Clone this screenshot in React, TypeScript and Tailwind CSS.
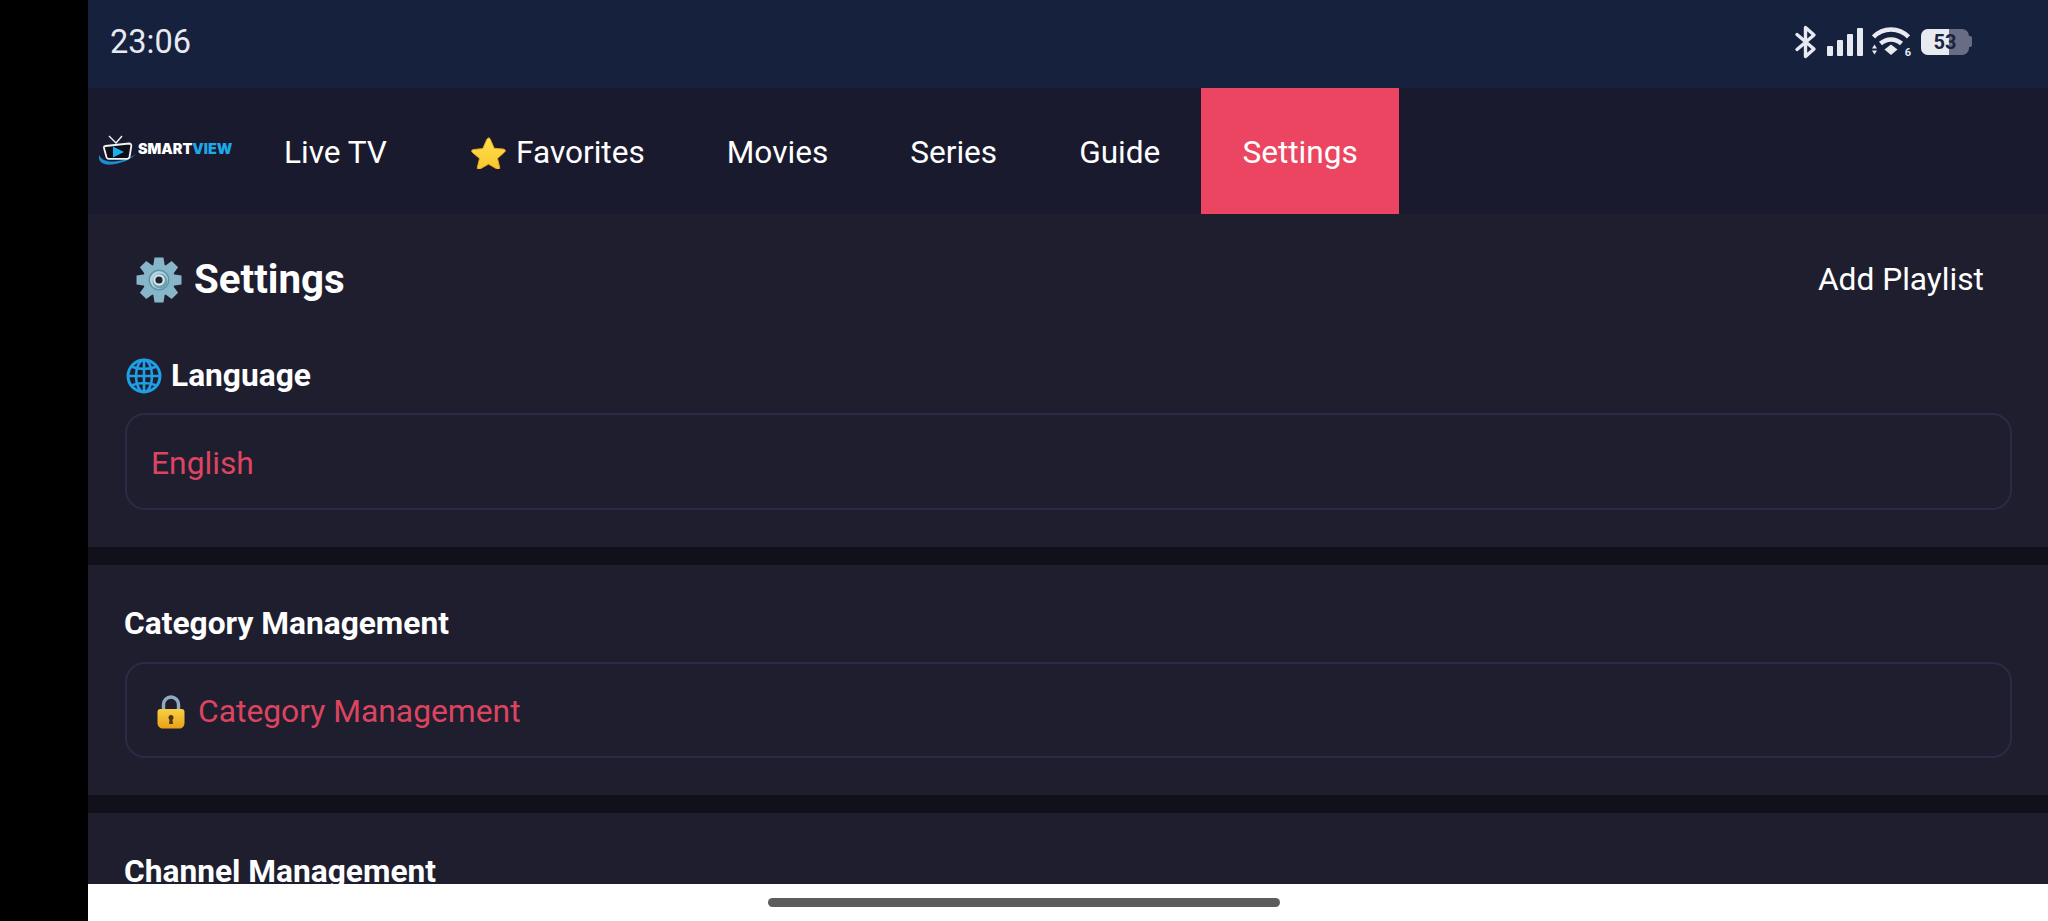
const FONT = "font-['Roboto',sans-serif]";

const tabs = ['Live TV', 'Favorites', 'Movies', 'Series', 'Guide', 'Settings'];

function Bluetooth() {
  return (
    <svg width="24" height="34" viewBox="0 0 24 34" fill="none" stroke="#e8eaf2" strokeWidth="3.4" strokeLinejoin="round" strokeLinecap="round">
      <path d="M3 9.5 20 24 11.5 31.5V2.5L20 10 3 24.5" />
    </svg>
  );
}

function Signal() {
  return (
    <svg width="36" height="28" viewBox="0 0 36 28" fill="#e8eaf2">
      <rect x="0" y="18" width="6" height="10" rx="1" />
      <rect x="10" y="12" width="6" height="16" rx="1" />
      <rect x="20" y="6" width="6" height="22" rx="1" />
      <rect x="30" y="0" width="6" height="28" rx="1" />
    </svg>
  );
}

function Wifi() {
  return (
    <div className="relative w-[38px] h-[30px]">
      <svg width="38" height="30" viewBox="0 0 38 30" fill="none">
        <path d="M1.5 10C11 0 27 0 36.5 10" stroke="#e8eaf2" strokeWidth="4.5" />
        <path d="M8.5 16.5C14.500 11 23.500 11 29.500 16.500" stroke="#e8eaf2" strokeWidth="4.500" />
        <path d="M12.500 22.500 19 17.500 25.500 22.500 19 28Z" fill="#e8eaf2" />
        <path d="M0 21.500H5L2.500 17.500ZM0 23.500H5L2.500 27.500Z" fill="#e8eaf2" />
      </svg>
      <span className="absolute right-[-1px] bottom-[-2px] text-[11px] leading-[12px] font-bold text-[#e8eaf2]">6</span>
    </div>
  );
}

function Battery() {
  return (
    <div className="flex items-center ml-[2px]">
      <div className="relative w-[48px] h-[26px] rounded-[7px] bg-[#686d85] overflow-hidden">
        <div className="h-full w-[28px] bg-[#e8eaf2]" />
        <span className="absolute inset-0 flex items-center justify-center text-[20px] leading-none font-bold text-[#1a2340]">53</span>
      </div>
      <div className="w-[3px] h-[11px] rounded-r-[2px] bg-[#686d85]" />
    </div>
  );
}

function Logo() {
  return (
    <div className="flex items-center w-[156px] h-full pl-[10px] pb-[3px] shrink-0">
      <svg width="40" height="34" viewBox="0 0 40 34" fill="none" className="shrink-0">
        <path d="M1.500 22C-1 28 5 32.500 14 31.500 23 30.500 32 27 38 21 31 26 22 28.500 14 28.500 7 28.500 2.500 26 1.500 22Z" fill="#1b8ed8" />
        <path d="M11 3 18 10 24 3" stroke="#f2f4f8" strokeWidth="1.400" />
        <path d="M7.500 13 31 10.500c1.500 0 2.500 1 2.300 2.500L31.500 24c-.3 1.200-1 1.800-2.300 1.800H11c-1.500 0-2.500-.8-2.700-2.300L6 15c-.2-1 .5-1.800 1.500-2Z" stroke="#f2f4f8" strokeWidth="1.800" fill="#0f0f18" />
        <path d="M15 13.500 26 19 15 24.500Z" fill="#1ab0ee" />
      </svg>
      <span className="text-[14.400px] leading-none font-black font-['Inter',sans-serif] text-white">
        SMART<span className="text-[#1fa8e8]">VIEW</span>
      </span>
    </div>
  );
}

function Star() {
  return (
    <svg width="35" height="33" viewBox="0 0 37 34" className="ml-[2px] mr-[10px] shrink-0">
      <defs>
        <linearGradient id="starFill" x1="0" y1="0" x2="0" y2="1">
          <stop offset="0" stopColor="#fde24f" />
          <stop offset="1" stopColor="#f8c62c" />
        </linearGradient>
      </defs>
      <path d="M18.500 1.500c1 0 1.500.6 2 1.700l4 9.300 9.800.9c2 .2 2.700 1.900 1.200 3.200l-7.500 6.700 2.300 9.400c.4 1.800-1.100 2.800-2.600 1.900l-9.200-5.300-9.200 5.300c-1.500.9-3-.1-2.600-1.900l2.300-9.400L1.500 17c-1.500-1.300-.8-3 1.200-3.200l9.800-.9 4-9.300c.5-1.100 1-1.700 2-1.700Z" fill="url(#starFill)" stroke="#e9a21f" strokeWidth="1" />
    </svg>
  );
}

function Gear() {
  const teeth = [0, 45, 90, 135, 180, 225, 270, 315];
  return (
    <svg width="46" height="46" viewBox="0 0 46 46" className="shrink-0">
      {teeth.map(a => (
        <path key={a} d="M18.500 0.500h9l1.500 10h-12Z" fill="#86b6c8" transform={`rotate(${a} 23 23)`} />
      ))}
      <circle cx="23" cy="23" r="16" fill="#86b6c8" />
      <circle cx="23" cy="23" r="10.500" fill="#5f93a8" />
      <path d="M23 14a9 9 0 0 1 9 9 9 9 0 0 1-9 9 9 9 0 0 1-9-9 9 9 0 0 1 9-9Z" fill="#b6d5df" />
      <circle cx="24" cy="24" r="7.500" fill="#6f9fb2" />
      <circle cx="23" cy="23" r="5.800" fill="#d6e6ea" />
      <circle cx="23" cy="23" r="3.600" fill="#20222e" />
    </svg>
  );
}

function Globe() {
  return (
    <svg width="36" height="36" viewBox="0 0 36 36" fill="none" stroke="#1e9fe6" strokeWidth="2.600" className="shrink-0">
      <circle cx="18" cy="18" r="16" strokeWidth="3" />
      <ellipse cx="18" cy="18" rx="8" ry="16" />
      <path d="M18 2v32M2 18h32M5 8.500c8 3 18 3 26 0M5 27.500c8-3 18-3 26 0" />
    </svg>
  );
}

function Lock() {
  return (
    <svg width="28" height="34" viewBox="0 0 28 34" className="shrink-0">
      <defs>
        <linearGradient id="lockFill" x1="0" y1="0" x2="0" y2="1">
          <stop offset="0" stopColor="#f9cf45" />
          <stop offset="1" stopColor="#e9a116" />
        </linearGradient>
      </defs>
      <path d="M6.500 16V9.500a7.500 7.500 0 0 1 15 0V16" fill="none" stroke="#8fadc0" strokeWidth="3.400" />
      <path d="M3.500 14h21c2 0 3 1 3 3v11c0 3.500-2.500 5.500-5.500 5.500H6C3 33.500.5 31.500.5 28V17c0-2 1-3 3-3Z" fill="url(#lockFill)" />
      <circle cx="14" cy="22.500" r="2.500" fill="#4a3310" />
      <path d="M12.800 23h2.400l.8 6h-4Z" fill="#4a3310" />
    </svg>
  );
}

function Section({ label, children }: { label: string; children?: React.ReactNode }) {
  return (
    <section className="px-[36px] pt-[40px] pb-[37px] border-b-[18px] border-[#11111b]">
      <h2 className="flex items-center h-[38px] mb-[19px] text-[31.700px] font-bold text-white">
        {label}
      </h2>
      {children}
    </section>
  );
}

function SelectBox({ className, children }: { className: string; children: React.ReactNode }) {
  return (
    <div className={`flex items-center ml-[1px] pt-[4px] px-[24px] rounded-[20px] border-2 border-[#2c2b45] text-[31.800px] text-[#dc4460] ${className}`}>
      {children}
    </div>
  );
}

export default function App() {
  return (
    <div className={`flex w-[2048px] h-[921px] bg-black overflow-hidden ${FONT}`}>
      <div className="w-[88px] shrink-0" />
      <div className="flex-1 flex flex-col min-w-0">
        {/* status bar */}
        <div className="flex items-center justify-between h-[88px] shrink-0 pl-[22px] pr-[76px] pb-[5px] bg-[#16213e]">
          <span className="pt-[2px] text-[32.500px] text-[#e8eaf2]">23:06</span>
          <div className="flex items-center gap-[9px]">
            <Bluetooth />
            <Signal />
            <Wifi />
            <Battery />
          </div>
        </div>

        {/* nav */}
        <nav className="flex items-stretch h-[126px] shrink-0 bg-[#1a1a2e]">
          <Logo />
          {tabs.map(t => (
            <button
              key={t}
              className={`flex items-center pt-[3px] text-[31.600px] text-white mr-[2px] ${t === 'Settings' ? 'ml-[-1px] px-[41px] bg-[#ec4561]' : 'px-[40px]'}`}
            >
              {t === 'Favorites' && <Star />}
              {t}
            </button>
          ))}
        </nav>

        {/* page */}
        <div className="flex-1 min-h-0 overflow-hidden bg-[#1e1e2f]">
          <div className="flex items-center justify-between pt-[36px] pl-[48px] pr-[64px] h-[96px]">
            <h1 className="flex items-center gap-[12px] text-[40.300px] font-bold text-white">
              <Gear />
              Settings
            </h1>
            <button className="text-[31.700px] text-white">Add Playlist</button>
          </div>

          <section className="px-[36px] pt-[47px] pb-[37px] border-b-[18px] border-[#11111b]">
            <h2 className="flex items-center h-[38px] mb-[18px] text-[31.700px] font-bold text-white">
              <span className="ml-[2px] mr-[9px]"><Globe /></span>
              Language
            </h2>
            <SelectBox className="h-[97px]">English</SelectBox>
          </section>

          <Section label="Category Management">
            <SelectBox className="h-[96px]">
              <span className="ml-[6px] mr-[13px]"><Lock /></span>
              Category Management
            </SelectBox>
          </Section>

          <Section label="Channel Management" />
        </div>

        {/* gesture bar */}
        <div className="flex items-center justify-center h-[37px] shrink-0 bg-white pr-[88px]">
          <div className="w-[512px] h-[9px] rounded-full bg-[#5c5c5c]" />
        </div>
      </div>
    </div>
  );
}
